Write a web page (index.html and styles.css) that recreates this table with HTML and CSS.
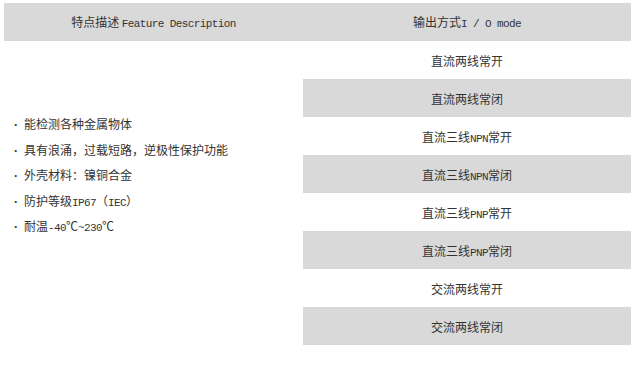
FILE: index.html
```html
<!DOCTYPE html>
<html lang="zh-CN">
<head>
    <meta charset="UTF-8">
    <meta name="viewport" content="width=device-width, initial-scale=1.0">
    <title>产品特点</title>
    <link rel="stylesheet" href="styles.css">
</head>
<body>
    <div class="spec-table">
        <div class="head"><span>特点描述 <span class="en">Feature Description</span></span></div>
        <div class="head"><span>输出方式<span class="en">I / O mode</span></span></div>

        <div class="features">
            <p>能检测各种金属物体</p>
            <p>具有浪涌，过载短路，逆极性保护功能</p>
            <p>外壳材料：镍铜合金</p>
            <p>防护等级<span class="en">IP67</span>（<span class="en">IEC</span>）</p>
            <p>耐温<span class="en">-40</span>℃<span class="en">~230</span>℃</p>
        </div>

        <div class="mode"><span>直流两线常开</span></div>
        <div class="mode alt"><span>直流两线常闭</span></div>
        <div class="mode"><span>直流三线<span class="en">NPN</span>常开</span></div>
        <div class="mode alt"><span>直流三线<span class="en">NPN</span>常闭</span></div>
        <div class="mode"><span>直流三线<span class="en">PNP</span>常开</span></div>
        <div class="mode alt"><span>直流三线<span class="en">PNP</span>常闭</span></div>
        <div class="mode"><span>交流两线常开</span></div>
        <div class="mode alt"><span>交流两线常闭</span></div>
    </div>
</body>
</html>
```

FILE: styles.css
```css
body {
    margin: 0;
    background: #fff;
    color: #333;
    font-family: "Noto Sans CJK SC", sans-serif;
    font-size: 12px;
}

/* two column spec table, left cell spans all mode rows */
.spec-table {
    display: grid;
    grid-template-columns: 299px 328px;
    grid-auto-rows: 38px;
    margin: 3px 0 0 4px;
}

.en {
    font-family: "Liberation Mono", monospace;
    font-size: 11px;
    letter-spacing: -0.6px;
}

.head {
    background: #d9d9d9;
    display: flex;
    align-items: center;
    justify-content: center;
    padding-bottom: 2px;
}

.features {
    grid-row: span 8;
    padding: 70px 0 0 10px;
}

.features p {
    margin: 0;
    height: 25.6px;
    line-height: 25.6px;
}

.features p::before {
    content: "·";
    font-family: "Liberation Sans", sans-serif;
    font-weight: bold;
    margin-right: 6px;
}

.mode {
    display: flex;
    align-items: center;
    justify-content: center;
}

.mode.alt {
    background: #d9d9d9;
}
```
